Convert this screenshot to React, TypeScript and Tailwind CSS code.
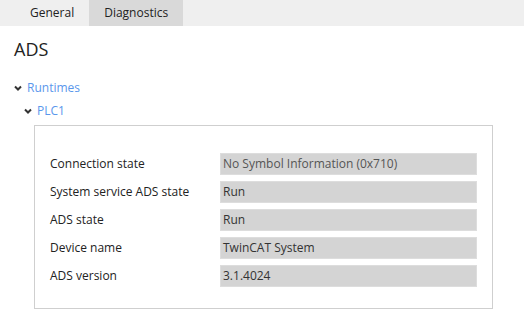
const rows = [
  { label: "Connection state", value: "No Symbol Information (0x710)", dim: true },
  { label: "System service ADS state", value: "Run" },
  { label: "ADS state", value: "Run" },
  { label: "Device name", value: "TwinCAT System" },
  { label: "ADS version", value: "3.1.4024" },
];

const Chevron = () => (
  <svg width="8" height="6" viewBox="0 0 8 6" className="shrink-0">
    <path d="M1 1.5 L4 4.5 L7 1.5" fill="none" stroke="#333" strokeWidth="2" />
  </svg>
);

export default function App() {
  return (
    <div className="w-[524px] h-[313px] bg-white text-[12px] text-[#222] font-['Open_Sans',sans-serif]">
      {/* Tabs */}
      <div className="flex h-[26px] bg-[#efefef] pl-[15px]">
        <div className="flex items-center px-[15px] text-[12px]">General</div>
        <div className="flex items-center px-[15px] bg-[#d9d9d9] text-[12px]">Diagnostics</div>
      </div>

      <h1 className="pl-[14px] pt-[11px] text-[18px] leading-[24px]">ADS</h1>

      {/* Tree */}
      <div className="pt-[17px] pl-[14px]">
        <div className="flex items-center gap-[5px] h-[20px]">
          <Chevron />
          <span className="text-[#5a97ec]">Runtimes</span>
        </div>
        <div className="flex items-center gap-[5px] h-[20px] pl-[10px] mt-[3px]">
          <Chevron />
          <span className="text-[#5a97ec]">PLC1</span>
        </div>
      </div>

      {/* Panel */}
      <div className="ml-[34px] mt-[4px] w-[459px] h-[184px] border border-[#cfcfcf] pt-[27px] pl-[15px]">
        <div className="flex flex-col gap-[6px]">
          {rows.map((r) => (
            <div key={r.label} className="flex items-center">
              <div className="w-[170px]">{r.label}</div>
              <div
                className={`w-[257px] h-[22px] flex items-center px-[2px] bg-[#d4d4d4] border border-[#dddddd] ${
                  r.dim ? "text-[#555]" : "text-[#333]"
                }`}
              >
                {r.value}
              </div>
            </div>
          ))}
        </div>
      </div>
    </div>
  );
}
